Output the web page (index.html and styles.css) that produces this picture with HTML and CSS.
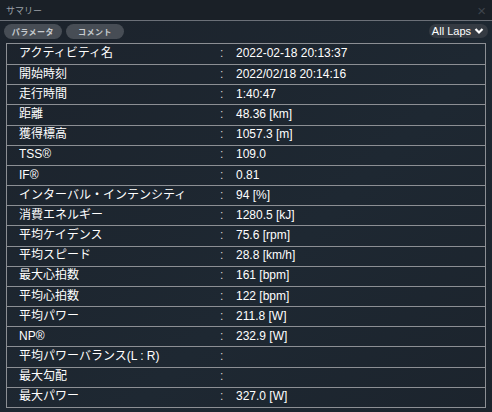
FILE: index.html
```html
<html>
<head>
    <link rel="stylesheet" href="styles.css">
</head>
<body>
    <div class="panel">
        <div class="titlebar">
            <span class="title">サマリー</span>
            <span class="close">&times;</span>
        </div>
        <div class="toolbar">
            <div class="tabs">
                <button class="tab">パラメータ</button>
                <button class="tab">コメント</button>
            </div>
            <div class="laps">All Laps
                <svg width="10" height="8" viewBox="0 0 10 8"><path d="M1.5 2 L5 5.5 L8.5 2" fill="none" stroke="#fff" stroke-width="2.2"/></svg>
            </div>
        </div>
        <div class="summary">
            <div class="row"><span class="label">アクティビティ名</span><span class="colon">:</span><span class="value">2022-02-18 20:13:37</span></div>
            <div class="row"><span class="label">開始時刻</span><span class="colon">:</span><span class="value">2022/02/18 20:14:16</span></div>
            <div class="row"><span class="label">走行時間</span><span class="colon">:</span><span class="value">1:40:47</span></div>
            <div class="row"><span class="label">距離</span><span class="colon">:</span><span class="value">48.36 [km]</span></div>
            <div class="row"><span class="label">獲得標高</span><span class="colon">:</span><span class="value">1057.3 [m]</span></div>
            <div class="row"><span class="label">TSS®</span><span class="colon">:</span><span class="value">109.0</span></div>
            <div class="row"><span class="label">IF®</span><span class="colon">:</span><span class="value">0.81</span></div>
            <div class="row"><span class="label">インターバル・インテンシティ</span><span class="colon">:</span><span class="value">94 [%]</span></div>
            <div class="row"><span class="label">消費エネルギー</span><span class="colon">:</span><span class="value">1280.5 [kJ]</span></div>
            <div class="row"><span class="label">平均ケイデンス</span><span class="colon">:</span><span class="value">75.6 [rpm]</span></div>
            <div class="row"><span class="label">平均スピード</span><span class="colon">:</span><span class="value">28.8 [km/h]</span></div>
            <div class="row"><span class="label">最大心拍数</span><span class="colon">:</span><span class="value">161 [bpm]</span></div>
            <div class="row"><span class="label">平均心拍数</span><span class="colon">:</span><span class="value">122 [bpm]</span></div>
            <div class="row"><span class="label">平均パワー</span><span class="colon">:</span><span class="value">211.8 [W]</span></div>
            <div class="row"><span class="label">NP®</span><span class="colon">:</span><span class="value">232.9 [W]</span></div>
            <div class="row"><span class="label">平均パワーバランス(L : R)</span><span class="colon">:</span><span class="value"></span></div>
            <div class="row"><span class="label">最大勾配</span><span class="colon">:</span><span class="value"></span></div>
            <div class="row"><span class="label">最大パワー</span><span class="colon">:</span><span class="value">327.0 [W]</span></div>
        </div>
    </div>
</body>
</html>
```

FILE: styles.css
```css
body {
    margin: 0;
    background-color: #1b2128;
    font-family: "Liberation Sans", "Noto Sans CJK JP", sans-serif;
    color: #ffffff;
}
.panel {
    width: 492px;
    height: 412px;
    background: linear-gradient(135deg, #1c232c 0%, #1e2832 60%, #1c242d 100%);
    overflow: hidden;
}
.titlebar {
    height: 21px;
    background-color: #1a2027;
    border-bottom: 1px solid #6b7078;
    display: flex;
    justify-content: space-between;
    align-items: center;
    padding: 0 6px;
    box-sizing: border-box;
}
.title {
    font-size: 9px;
    color: #9aa0a8;
}
.close {
    font-size: 15px;
    color: #3e444c;
    line-height: 1;
}
.toolbar {
    display: flex;
    justify-content: space-between;
    align-items: center;
    padding: 1px 4px 0 4px;
    height: 18px;
}
.tabs {
    display: flex;
    gap: 4px;
}
.tab {
    background-color: #474d55;
    border: none;
    border-radius: 8px;
    width: 58px;
    height: 15px;
    padding: 0;
    font-family: "Noto Sans CJK JP", sans-serif;
    font-size: 8px;
    font-weight: bold;
    letter-spacing: 0.5px;
    color: #c8ccd0;
}
.laps {
    background-color: #353b43;
    border-radius: 7px;
    height: 14px;
    padding: 0 4px 0 3px;
    display: flex;
    align-items: center;
    gap: 3px;
    font-size: 11px;
    color: #ffffff;
}
.summary {
    margin: 3px 6px 0 6px;
    border: 1px solid #8c8f94;
    height: 363px;
    display: grid;
    grid-template-rows: repeat(18, 1fr);
}
.row {
    display: flex;
    align-items: center;
    border-top: 1px solid #8c8f94;
    font-size: 12px;
    line-height: 14px;
    padding-bottom: 2px;
}
.row:first-child {
    border-top: none;
}
.label {
    width: 201px;
    padding-left: 12px;
}
.colon {
    width: 16px;
    color: #d0d0d0;
}
.value {
    flex: 1;
}
```
